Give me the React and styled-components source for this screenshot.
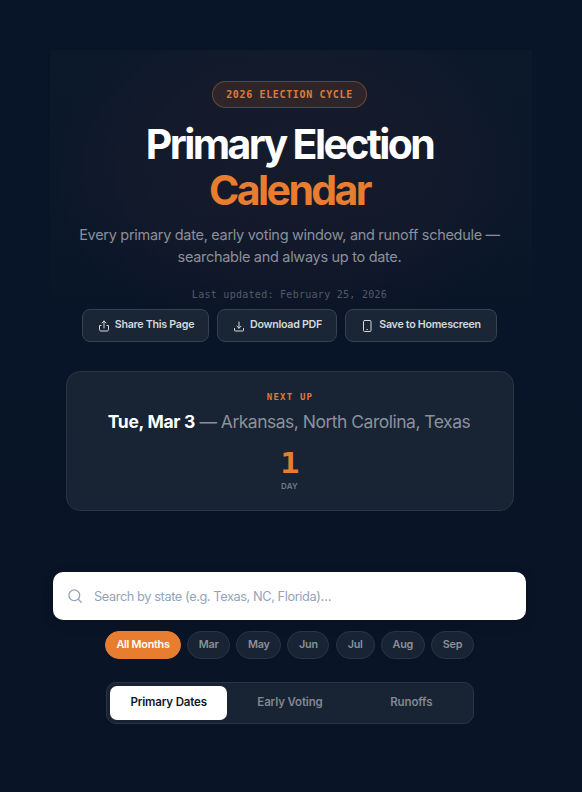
import React from "react";
import styled, { createGlobalStyle } from "styled-components";

const Global = createGlobalStyle`
  * { box-sizing: border-box; }
  body { margin: 0; background: #081325; font-family: Inter, "DM Sans", sans-serif; }
  button, input { font-family: inherit; }
`;

const mono = `"DejaVu Sans Mono", "Liberation Mono", monospace`;

const Page = styled.div`
  width: 582px;
  height: 792px;
  overflow: hidden;
  display: flex;
  flex-direction: column;
  align-items: center;
  padding: 50px 2px 0 0;
  background: linear-gradient(#081528 0%, #081427 45%, #091426 100%);
`;

const Hero = styled.header`
  width: 482px;
  height: 321px;
  margin-left: 2px;
  padding: 31px 3px 0 0;
  display: flex;
  flex-direction: column;
  align-items: center;
  background:
    radial-gradient(ellipse 50% 55% at 50% 38%, rgba(232, 90, 60, 0.045) 0%, rgba(232, 90, 60, 0.03) 60%, rgba(232, 90, 60, 0) 100%),
    linear-gradient(rgba(40, 50, 62, 0.13) 0%, rgba(40, 50, 62, 0.11) 50%, rgba(40, 50, 62, 0) 85%);
`;

const Badge = styled.div`
  width: 155px;
  height: 27px;
  border: 1px solid rgba(232, 125, 47, 0.35);
  border-radius: 14px;
  background: rgba(232, 125, 47, 0.12);
  color: #e07a35;
  font: 700 10px/26px ${mono};
  letter-spacing: 0.65px;
  text-align: center;
  white-space: nowrap;
`;

const Title = styled.h1`
  margin: 13px 0 0;
  color: #fff;
  font-size: 41px;
  line-height: 46px;
  font-weight: 700;
  letter-spacing: -2.6px;
  text-align: center;
  white-space: nowrap;
`;

const Accent = styled.span`
  display: block;
  color: #e87d2f;
`;

const Subtitle = styled.p`
  margin: 11px 0 0;
  color: #8b909a;
  font-size: 14.5px;
  line-height: 22px;
  letter-spacing: -0.3px;
  text-align: center;
  white-space: nowrap;
`;

const Updated = styled.div`
  margin-top: 20px;
  color: #525a67;
  font: 400 10px/14px ${mono};
  letter-spacing: 0.28px;
  white-space: nowrap;
`;

const Actions = styled.div`
  display: flex;
  gap: 8px;
  margin-top: 7px;
`;

const Action = styled.button`
  width: ${(p) => p.$width}px;
  height: 33px;
  padding: 0 0 3px 1px;
  display: flex;
  align-items: center;
  justify-content: center;
  gap: 5px;
  border: 1px solid #374251;
  border-radius: 8px;
  background: #1a2636;
  color: #d5d8dc;
  font-size: 10.7px;
  font-weight: 600;
  letter-spacing: -0.28px;
  white-space: nowrap;
  svg { margin-top: 4px; flex: none; }
`;

const NextCard = styled.section`
  width: 448px;
  height: 140px;
  padding-top: 18px;
  display: flex;
  flex-direction: column;
  align-items: center;
  border: 1px solid #2a3544;
  border-radius: 14px;
  background: #182334;
`;

const NextLabel = styled.div`
  color: #e07a35;
  font: 700 9px/14px ${mono};
  letter-spacing: 1.2px;
`;

const NextLine = styled.div`
  margin: 6px 2px 0 0;
  color: #8b919a;
  font-size: 17.5px;
  line-height: 24px;
  letter-spacing: -0.5px;
  white-space: nowrap;
`;

const NextDate = styled.strong`
  color: #fff;
  font-weight: 700;
  letter-spacing: -0.3px;
`;

const Count = styled.div`
  margin: 12px 1px 0 0;
  color: #e87d2f;
  font: 700 29px/34px ${mono};
  transform: scaleX(1.1);
`;

const CountUnit = styled.div`
  padding-right: 1px;
  color: #737b87;
  font-size: 8px;
  line-height: 12px;
  font-weight: 600;
  letter-spacing: 0.2px;
`;

const Search = styled.label`
  width: 473px;
  height: 48px;
  margin: 61px 1px 0 0;
  padding: 0 15px;
  display: flex;
  align-items: center;
  gap: 12px;
  border-radius: 10px;
  background: #fff;
  box-shadow: 0 3px 12px rgba(0, 0, 0, 0.16);
`;

const SearchInput = styled.input`
  flex: 1;
  min-width: 0;
  padding: 0;
  border: 0;
  outline: 0;
  background: none;
  font-size: 12.8px;
  letter-spacing: -0.42px;
  &::placeholder { color: #94a3b8; opacity: 1; }
`;

const Months = styled.div`
  width: 369px;
  display: flex;
  justify-content: space-between;
  margin: 11px 1px 0 0;
`;

const Month = styled.button`
  width: ${(p) => p.$width}px;
  height: 28px;
  padding: 0 0 1px;
  border: 1px solid ${(p) => (p.$active ? "#e87d2f" : "#293444")};
  border-radius: 14px;
  background: ${(p) => (p.$active ? "#e87d2f" : "#182334")};
  color: ${(p) => (p.$active ? "#fff" : "#8b919a")};
  font-size: 10.8px;
  font-weight: 600;
  letter-spacing: -0.25px;
  white-space: nowrap;
`;

const Tabs = styled.nav`
  width: 368px;
  height: 42px;
  margin-top: 23px;
  padding: 3px;
  display: flex;
  gap: 4px;
  border: 1px solid #293444;
  border-radius: 10px;
  background: #182334;
`;

const Tab = styled.button`
  flex: 1;
  padding: 0 0 2px;
  border: 0;
  border-radius: 7px;
  background: ${(p) => (p.$active ? "#fff" : "transparent")};
  color: ${(p) => (p.$active ? "#0b1729" : "#818791")};
  font-size: 11.5px;
  font-weight: 600;
  letter-spacing: -0.15px;
`;

const Icon = ({ children }) => (
  <svg width="12" height="12" viewBox="0 0 12 12" fill="none" stroke="currentColor" strokeWidth="1" strokeLinecap="round" strokeLinejoin="round">
    {children}
  </svg>
);

const months = [["All Months", 76], ["Mar", 43], ["May", 45], ["Jun", 42], ["Jul", 39], ["Aug", 44], ["Sep", 43]];

export default function App() {
  return (
    <>
      <Global />
      <Page>
        <Hero>
          <Badge>2026 ELECTION CYCLE</Badge>
          <Title>Primary Election<Accent>Calendar</Accent></Title>
          <Subtitle>
            Every primary date, early voting window, and runoff schedule —<br />
            searchable and always up to date.
          </Subtitle>
          <Updated>Last updated: February 25, 2026</Updated>
          <Actions>
            <Action $width={127}>
              <Icon><path d="M3 5.5H1.5v4.2c0 .8.5 1.3 1.3 1.3h6.4c.8 0 1.3-.5 1.3-1.3V5.5H9M6 8V1M4 3l2-2 2 2" /></Icon>
              Share This Page
            </Action>
            <Action $width={120}>
              <Icon><path d="M1.5 8.5v2c0 .3.2.5.5.5h8c.3 0 .5-.2.5-.5v-2M6 2v6.2M4 6.2l2 2 2-2" /></Icon>
              Download PDF
            </Action>
            <Action $width={152}>
              <Icon><rect x="1.5" y=".5" width="7.5" height="11" rx="1" /><path d="M5 9.5h.5" /></Icon>
              Save to Homescreen
            </Action>
          </Actions>
        </Hero>
        <NextCard>
          <NextLabel>NEXT UP</NextLabel>
          <NextLine><NextDate>Tue, Mar 3</NextDate> — Arkansas, North Carolina, Texas</NextLine>
          <Count>1</Count>
          <CountUnit>DAY</CountUnit>
        </NextCard>
        <Search>
          <svg width="14" height="14" viewBox="0 0 14 14" fill="none" stroke="#94a3b8" strokeWidth="1.3" strokeLinecap="round">
            <circle cx="6.3" cy="6.3" r="5.4" /><path d="M10.3 10.3l2.9 2.9" />
          </svg>
          <SearchInput placeholder="Search by state (e.g. Texas, NC, Florida)…" />
        </Search>
        <Months>
          {months.map(([m, w], i) => <Month key={m} $width={w} $active={i === 0}>{m}</Month>)}
        </Months>
        <Tabs>
          <Tab $active>Primary Dates</Tab>
          <Tab>Early Voting</Tab>
          <Tab>Runoffs</Tab>
        </Tabs>
      </Page>
    </>
  );
}
